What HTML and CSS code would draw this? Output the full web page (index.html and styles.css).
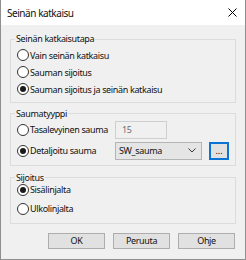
FILE: index.html
```html
<!DOCTYPE html>
<html lang="fi">
<head>
<meta charset="utf-8">
<link rel="stylesheet" href="styles.css">
</head>
<body>
<div class="window">
  <div class="titlebar">
    <span class="title">Seinän katkaisu</span>
    <svg class="close" width="9" height="9" viewBox="0 0 9 9"><path d="M0.5 0.5 L8.5 8.5 M8.5 0.5 L0.5 8.5" stroke="#000" stroke-width="1" fill="none"/></svg>
  </div>
  <div class="content">
    <fieldset class="group g1">
      <legend>Seinän katkaisutapa</legend>
      <div class="options">
        <label class="opt"><span class="radio"></span>Vain seinän katkaisu</label>
        <label class="opt"><span class="radio"></span>Sauman sijoitus</label>
        <label class="opt"><span class="radio checked"></span>Sauman sijoitus ja seinän katkaisu</label>
      </div>
    </fieldset>
    <fieldset class="group g2">
      <legend>Saumatyyppi</legend>
      <div class="rows">
        <div class="row">
          <label class="opt lbl"><span class="radio"></span>Tasalevyinen sauma</label>
          <div class="textbox">15</div>
        </div>
        <div class="row">
          <label class="opt lbl"><span class="radio checked"></span>Detaljoitu sauma</label>
          <div class="combo"><span>SW_sauma</span><svg class="chev" width="8" height="5" viewBox="0 0 8 5"><path d="M0.5 0.5 L4 4 L7.5 0.5" stroke="#333" stroke-width="1" fill="none"/></svg></div>
          <div class="browse">...</div>
        </div>
      </div>
    </fieldset>
    <fieldset class="group g3">
      <legend>Sijoitus</legend>
      <div class="options">
        <label class="opt"><span class="radio checked"></span>Sisälinjalta</label>
        <label class="opt"><span class="radio"></span>Ulkolinjalta</label>
      </div>
    </fieldset>
    <div class="buttons">
      <div class="btn">OK</div>
      <div class="btn">Peruuta</div>
      <div class="btn">Ohje</div>
    </div>
  </div>
</div>
</body>
</html>
```
FILE: styles.css
```css
html, body {
  margin: 0;
  padding: 0;
  background: #ffffff;
}
body {
  font-family: "Noto Sans", "Open Sans", sans-serif;
  font-size: 9px;
  letter-spacing: -0.35px;
  color: #111;
}
.window {
  width: 246px;
  height: 260px;
  box-sizing: border-box;
  border: 1px solid #8f8f8f;
  border-top: none;
  background: #f0f0f0;
  display: flex;
  flex-direction: column;
}
.titlebar {
  height: 25px;
  flex: 0 0 25px;
  background: #ffffff;
  display: flex;
  align-items: center;
  justify-content: space-between;
  padding: 0 8px 0 6px;
  font-size: 10px;
  letter-spacing: -0.45px;
}
.close {
  display: block;
}
.content {
  padding: 8px 9px 0 9px;
}
.group {
  margin: 0;
  border: 1px solid #dcdcdc;
  padding: 0 6px 4px 6px;
  min-width: 0;
}
.group legend {
  padding: 0 1px;
  margin-left: -2px;
  line-height: 12px;
  font-size: 9px;
}
.options {
  display: flex;
  flex-direction: column;
}
.opt {
  display: flex;
  align-items: center;
  height: 17px;
  white-space: nowrap;
}
.radio {
  width: 12px;
  height: 12px;
  box-sizing: border-box;
  border: 1px solid #333;
  border-radius: 50%;
  background: #fff;
  margin-right: 1px;
  flex: 0 0 12px;
  display: flex;
  align-items: center;
  justify-content: center;
}
.radio.checked::after {
  content: "";
  width: 6px;
  height: 6px;
  border-radius: 50%;
  background: #1a1a1a;
}
.g1 .options {
  padding-top: 1.5px;
}
.g2 {
  margin-top: 5px;
  padding-bottom: 5px;
}
.rows {
  padding-top: 1px;
  display: flex;
  flex-direction: column;
  gap: 3px;
}
.row {
  display: flex;
  align-items: center;
  height: 18px;
}
.lbl {
  flex: 0 0 98px;
}
.textbox {
  width: 52px;
  height: 18px;
  box-sizing: border-box;
  border: 1px solid #cfcfcf;
  background: #f0f0f0;
  color: #6d6d6d;
  padding-left: 6px;
  display: flex;
  align-items: center;
}
.combo {
  width: 88px;
  height: 18px;
  box-sizing: border-box;
  border: 1px solid #b4b4b4;
  background: #e5e5e5;
  padding: 0 5px 0 3px;
  display: flex;
  align-items: center;
  justify-content: space-between;
}
.chev {
  display: block;
}
.browse {
  margin-left: 7px;
  width: 20px;
  height: 18px;
  box-sizing: border-box;
  border: 2px solid #0a74d6;
  background: #e1e1e1;
  display: flex;
  align-items: center;
  justify-content: center;
  letter-spacing: 0;
}
.g3 {
  margin-top: 6px;
  padding-bottom: 4.5px;
}
.g3 .options {
  margin-top: -3.5px;
}
.g3 .opt {
  height: 19px;
}
.buttons {
  margin-top: 9px;
  display: flex;
  justify-content: flex-end;
  gap: 8px;
  padding-right: 1px;
}
.btn {
  width: 57px;
  height: 16px;
  box-sizing: border-box;
  border: 1px solid #adadad;
  background: #e1e1e1;
  display: flex;
  align-items: center;
  justify-content: center;
}
```
